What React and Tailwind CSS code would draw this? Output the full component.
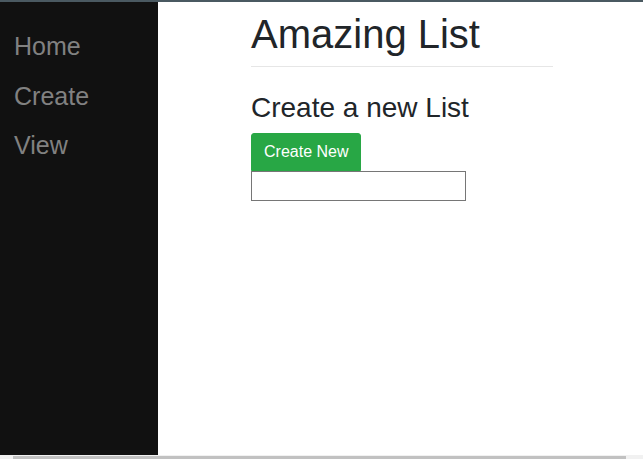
import React from 'react';

const links = ['Home', 'Create', 'View'];

const App = () => {
  return (
    <div className="h-[459px] w-[643px] flex flex-col overflow-hidden bg-white font-['Liberation_Sans',Arial,sans-serif]">
      {/* top edge */}
      <div className="h-[2px] bg-[#4a5961]"></div>

      <div className="flex flex-1 min-h-0">
        {/* sidebar */}
        <aside className="w-[158px] bg-[#111111] pt-5">
          {links.map((l) => (
            <a
              key={l}
              href="#"
              className="block pl-[14px] pr-2 py-1.5 text-[25px] leading-[1.5] text-[#818181]"
            >
              {l}
            </a>
          ))}
        </aside>

        {/* main */}
        <main className="flex-1 pl-[93px] pt-2 text-[#212529]">
          <div className="w-[302px]">
            <h1 className="text-[40px] leading-[1.2] mb-2">Amazing List</h1>
            <hr className="border-t border-[#e6e6e6]" />
            <h3 className="mt-[24px] mb-2 text-[28px] leading-[1.2]">Create a new List</h3>
            <button className="block bg-[#28a745] border border-[#28a745] text-white text-base leading-6 px-3 py-1.5 rounded-tl-[3px] rounded-tr-[3px]">
              Create New
            </button>
            <input type="text" className="block w-[215px] h-[30px] border border-[#767676] outline-none" />
          </div>
        </main>
      </div>

      {/* bottom scrollbar strip */}
      <div className="h-[4px] bg-[#f1f1f1] pl-[13px] pr-[17px] flex items-end">
        <div className="h-[3px] w-full bg-[#c1c1c1]"></div>
      </div>
    </div>
  );
};

export default App;
